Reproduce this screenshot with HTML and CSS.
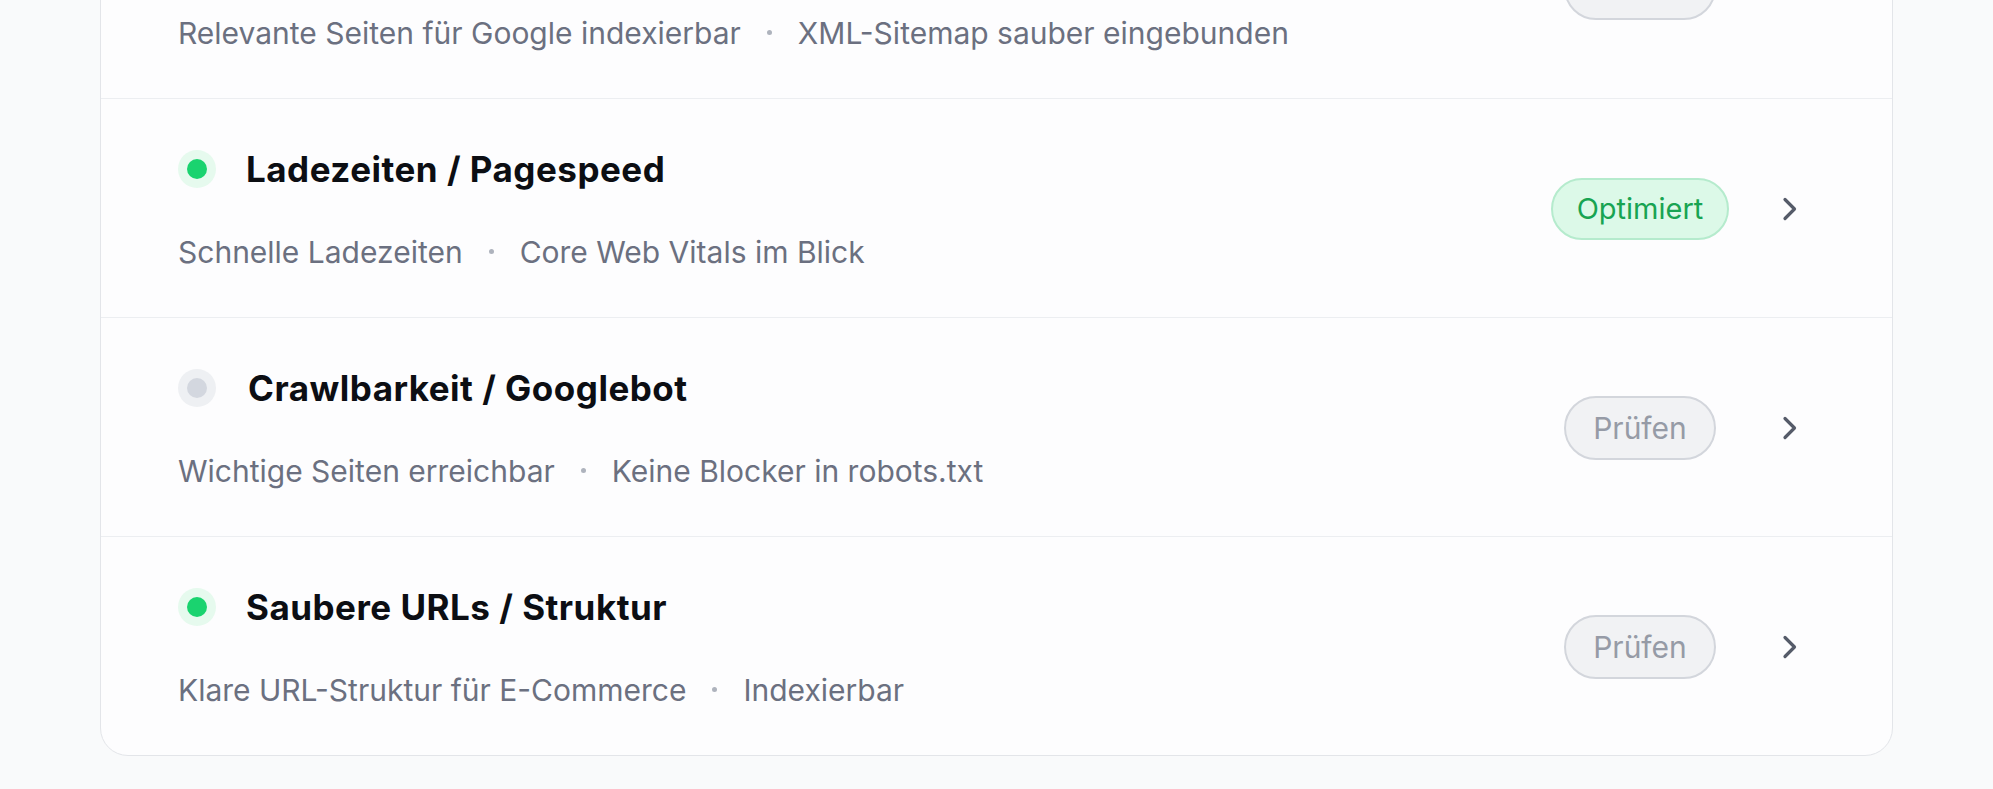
FILE: index.html
```html
<!DOCTYPE html>
<html lang="de">
<head>
<meta charset="utf-8">
<title>SEO Check</title>
<link rel="stylesheet" href="styles.css">
</head>
<body>
<main class="page">
  <section class="card">
    <div class="row">
      <div class="info">
        <div class="title-line">
          <span class="status status--ok"></span>
          <h3 class="title">Indexierung / Sitemap</h3>
        </div>
        <p class="sub">Relevante Seiten für Google indexierbar<span class="sep"></span>XML-Sitemap sauber eingebunden</p>
      </div>
      <div class="actions">
        <div class="badge-wrap"><span class="badge badge--check">Prüfen</span></div>
        <svg class="chev" viewBox="0 0 24 28" aria-hidden="true"><path d="M7 4.5l9.5 9.5-9.5 9.5"/></svg>
      </div>
    </div>
    <div class="row">
      <div class="info">
        <div class="title-line">
          <span class="status status--ok"></span>
          <h3 class="title">Ladezeiten / Pagespeed</h3>
        </div>
        <p class="sub">Schnelle Ladezeiten<span class="sep"></span>Core Web Vitals im Blick</p>
      </div>
      <div class="actions">
        <div class="badge-wrap"><span class="badge badge--ok">Optimiert</span></div>
        <svg class="chev" viewBox="0 0 24 28" aria-hidden="true"><path d="M7 4.5l9.5 9.5-9.5 9.5"/></svg>
      </div>
    </div>
    <div class="row">
      <div class="info">
        <div class="title-line">
          <span class="status status--idle"></span>
          <h3 class="title title--idle">Crawlbarkeit / Googlebot</h3>
        </div>
        <p class="sub">Wichtige Seiten erreichbar<span class="sep"></span>Keine Blocker in robots.txt</p>
      </div>
      <div class="actions">
        <div class="badge-wrap"><span class="badge badge--check">Prüfen</span></div>
        <svg class="chev" viewBox="0 0 24 28" aria-hidden="true"><path d="M7 4.5l9.5 9.5-9.5 9.5"/></svg>
      </div>
    </div>
    <div class="row">
      <div class="info">
        <div class="title-line">
          <span class="status status--ok"></span>
          <h3 class="title">Saubere URLs / Struktur</h3>
        </div>
        <p class="sub">Klare URL-Struktur für E-Commerce<span class="sep"></span>Indexierbar</p>
      </div>
      <div class="actions">
        <div class="badge-wrap"><span class="badge badge--check">Prüfen</span></div>
        <svg class="chev" viewBox="0 0 24 28" aria-hidden="true"><path d="M7 4.5l9.5 9.5-9.5 9.5"/></svg>
      </div>
    </div>
  </section>
</main>
</body>
</html>
```

FILE: styles.css
```css
* { box-sizing: border-box; }

html, body {
  margin: 0;
  padding: 0;
}

body {
  background: #f9fafb;
  font-family: "Inter", "Noto Sans", "Liberation Sans", sans-serif;
  color: #0f1115;
  overflow: hidden;
}

.page {
  padding: 0 100px;
}

.card {
  margin-top: -121px;
  background: #fdfdfe;
  border: 1px solid #e3e5e9;
  border-radius: 28px;
}

.row {
  display: flex;
  align-items: center;
  justify-content: space-between;
  height: 219px;
  padding: 0 90px 0 77px;
  border-top: 1px solid #eceef1;
}

.row:first-child {
  height: 218px;
  border-top: none;
}

.row:first-child .actions {
  margin-top: -3px;
}

.info {
  display: flex;
  flex-direction: column;
  gap: 45px;
  padding-top: 2px;
}

.title-line {
  display: flex;
  align-items: center;
  gap: 30px;
  height: 40px;
}

.status {
  width: 38px;
  height: 38px;
  border-radius: 50%;
  display: flex;
  align-items: center;
  justify-content: center;
  flex: none;
}

.status::after {
  content: "";
  width: 20px;
  height: 20px;
  border-radius: 50%;
}

.status--ok { background: #e6faee; }
.status--ok::after { background: #1ad36f; }

.status--idle { background: #eef0f3; }
.status--idle::after { background: #d3d7df; }

.title {
  margin: 0;
  font-size: 35px;
  line-height: 40px;
  font-weight: 700;
  letter-spacing: 0.5px;
  color: #0c0e13;
}

.title--idle { margin-left: 2px; }

.sub {
  margin: 0;
  display: flex;
  align-items: center;
  font-size: 30px;
  line-height: 36px;
  font-weight: 400;
  color: #6b7080;
}

.sep {
  width: 5px;
  height: 5px;
  border-radius: 50%;
  background: #aeb3bd;
  margin: 0 26px;
  flex: none;
}

.actions {
  display: flex;
  align-items: center;
  gap: 40px;
  margin-top: 2px;
}

.badge-wrap {
  width: 196px;
  display: flex;
  justify-content: center;
}

.badge {
  display: inline-block;
  font-size: 29px;
  line-height: 34px;
  font-weight: 400;
  padding: 12px 24px;
  border-radius: 999px;
  border: 2px solid transparent;
}

.badge--ok {
  background: #dcf9e8;
  border-color: #b5ebcd;
  color: #18a452;
}

.badge--check {
  background: #f1f2f4;
  border-color: #d3d6dc;
  color: #969ba6;
  font-size: 30px;
  padding: 13px 27px;
}

.chev {
  width: 24px;
  height: 28px;
  flex: none;
}

.chev path {
  fill: none;
  stroke: #555b69;
  stroke-width: 3.2;
  stroke-linecap: round;
  stroke-linejoin: round;
}
```
